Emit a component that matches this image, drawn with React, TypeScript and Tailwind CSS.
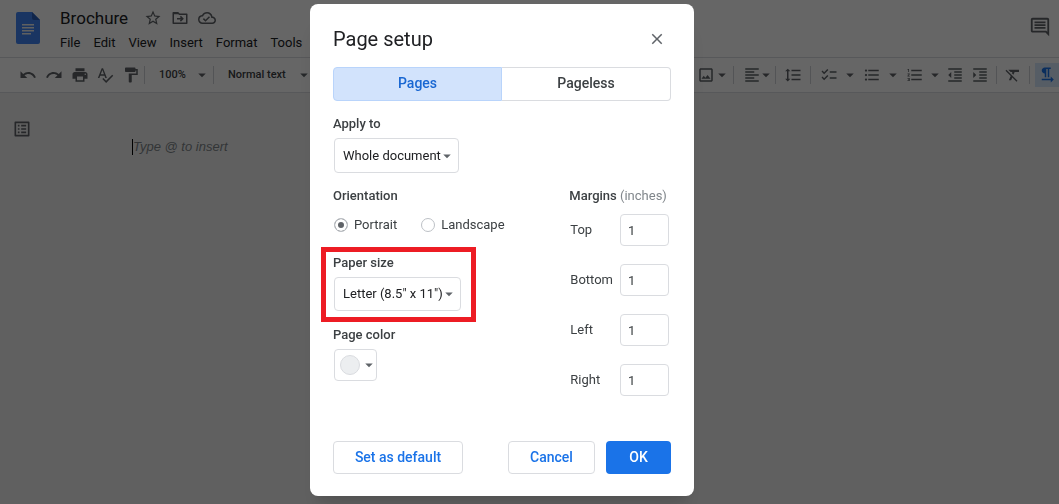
import { useState } from 'react';
import type { IconType } from 'react-icons';
import {
  MdArrowDropDown,
  MdChecklist,
  MdClose,
  MdFormatAlignLeft,
  MdFormatClear,
  MdFormatIndentDecrease,
  MdFormatIndentIncrease,
  MdFormatLineSpacing,
  MdFormatListBulleted,
  MdFormatListNumbered,
  MdFormatPaint,
  MdFormatTextdirectionLToR,
  MdOutlineCloudDone,
  MdOutlineImage,
  MdOutlineInsertComment,
  MdOutlineListAlt,
  MdPrint,
  MdRedo,
  MdSpellcheck,
  MdStarBorder,
  MdUndo,
} from 'react-icons/md';

const menus = ['File', 'Edit', 'View', 'Insert', 'Format', 'Tools'];
const sides = ['Top', 'Bottom', 'Left', 'Right'];

function DocsLogo() {
  return (
    <svg viewBox="0 0 24 32" className="w-6 h-8" aria-hidden="true">
      <path d="M2 0h14l8 8v22a2 2 0 0 1-2 2H2a2 2 0 0 1-2-2V2a2 2 0 0 1 2-2z" fill="#4285f4" />
      <path d="M16 0l8 8h-6a2 2 0 0 1-2-2z" fill="#2a5db8" />
      <path d="M6 12h12v1.6H6zM6 15h12v1.6H6zM6 18h12v1.6H6zM6 21h9v1.6H6z" fill="#f1f1f1" />
    </svg>
  );
}

function MoveFolder() {
  return (
    <svg viewBox="0 0 24 24" className="w-[18px] h-[18px]" fill="none" stroke="currentColor" strokeWidth="2" aria-hidden="true">
      <path d="M3 5h6.2l2 2H21v12H3z" strokeLinejoin="round" />
      <path d="M3 6h7" />
      <path d="M8 13h7M12.5 9.8l3.2 3.2-3.2 3.2" />
    </svg>
  );
}

function Tool({ icon: Icon, label, className = 'w-[26px]' }: { icon: IconType; label: string; className?: string }) {
  return (
    <button aria-label={label} className={`flex h-6 shrink-0 items-center justify-center ${className}`}>
      <Icon className="w-[18px] h-[18px] shrink-0" />
    </button>
  );
}

function Caret({ label, className = 'w-4' }: { label: string; className?: string }) {
  return (
    <button aria-label={label} className={`flex h-6 shrink-0 items-center justify-center ${className}`}>
      <MdArrowDropDown className="w-[18px] h-[18px] shrink-0" />
    </button>
  );
}

function Divider() {
  return <div className="w-px h-[18px] shrink-0 bg-[#cfd2d6]" />;
}

function Editor() {
  return (
    <div className="min-h-screen bg-[#f1f1f1] text-[#202124]">
      {/* Title and menus */}
      <header className="flex h-[57px] justify-between bg-white pl-4 pr-2">
        <div className="flex">
          <div className="pt-3">
            <DocsLogo />
          </div>
          <div className="pl-5 pt-2">
            <div className="flex items-center h-5">
              <h1 className="text-[17px] leading-5">Brochure</h1>
              <div className="flex items-center gap-[9px] pl-4 text-[#5f6368]">
                <button aria-label="Star"><MdStarBorder className="w-[18px] h-[18px]" /></button>
                <button aria-label="Move"><MoveFolder /></button>
                <button aria-label="Saved to Drive"><MdOutlineCloudDone className="w-[18px] h-[18px]" /></button>
              </div>
            </div>
            <nav className="mt-1.5 flex gap-[13px] text-[13px] leading-[18px]">
              {menus.map((m) => (
                <button key={m}>{m}</button>
              ))}
            </nav>
          </div>
        </div>
        <button aria-label="Comments" className="pb-1 text-[#5f6368]">
          <MdOutlineInsertComment className="w-[22px] h-[22px]" />
        </button>
      </header>

      {/* Toolbar */}
      <div className="flex h-9 items-center justify-between border-y border-[#dadce0] bg-white pl-[15px] text-[#5f6368]">
        <div className="flex items-center">
          <Tool icon={MdUndo} label="Undo" />
          <Tool icon={MdRedo} label="Redo" />
          <Tool icon={MdPrint} label="Print" className="w-[25px]" />
          <Tool icon={MdSpellcheck} label="Spelling" />
          <Tool icon={MdFormatPaint} label="Paint format" />
          <Divider />
          <button className="flex items-center pl-3.5 text-[11px] font-medium text-[#3c4043]">
            <span className="w-[34px] text-left">100%</span>
            <MdArrowDropDown className="w-[18px] h-[18px] text-[#5f6368]" />
          </button>
          <span className="w-0.5" />
          <Divider />
          <button className="flex items-center pl-3.5 text-[11px] font-medium text-[#3c4043]">
            <span className="w-[67px] text-left">Normal text</span>
            <MdArrowDropDown className="w-[18px] h-[18px] text-[#5f6368]" />
          </button>
        </div>
        <div className="flex items-center">
          <Tool icon={MdOutlineImage} label="Image" className="w-4" />
          <Caret label="Image options" />
          <span className="w-[3px]" />
          <Divider />
          <span className="w-2" />
          <Tool icon={MdFormatAlignLeft} label="Align" className="w-5" />
          <Caret label="Align options" className="w-2" />
          <span className="w-[5px]" />
          <Divider />
          <Tool icon={MdFormatLineSpacing} label="Line spacing" className="w-[34px]" />
          <Divider />
          <Tool icon={MdChecklist} label="Checklist" className="w-[35px]" />
          <Caret label="Checklist options" className="w-2" />
          <Tool icon={MdFormatListBulleted} label="Bulleted list" className="w-[35px]" />
          <Caret label="Bulleted list options" className="w-2" />
          <Tool icon={MdFormatListNumbered} label="Numbered list" className="w-[35px]" />
          <Caret label="Numbered list options" className="w-1.5" />
          <span className="w-1" />
          <Tool icon={MdFormatIndentDecrease} label="Decrease indent" className="w-[25px]" />
          <Tool icon={MdFormatIndentIncrease} label="Increase indent" className="w-[25px]" />
          <span className="w-1" />
          <Divider />
          <Tool icon={MdFormatClear} label="Clear formatting" className="w-8" />
          <Divider />
          <span className="w-[5px]" />
          <button aria-label="Left to right" className="flex h-6 w-6 items-center justify-center bg-[#d8e8fd] text-[#1a73e8]">
            <MdFormatTextdirectionLToR className="w-[18px] h-[18px]" />
          </button>
        </div>
      </div>

      {/* Document */}
      <main className="flex pl-3 pt-[26px]">
        <button aria-label="Show outline" className="h-5 text-[#5f6368]">
          <MdOutlineListAlt className="w-5 h-5" />
        </button>
        <p className="ml-[100px] mt-5 h-4 border-l border-black font-['Liberation_Sans',Arial,sans-serif] text-[13px] italic leading-4 text-[#80868b]">
          Type @ to insert
        </p>
      </main>
    </div>
  );
}

function PickList({ id, value, className }: { id: string; value: string; className: string }) {
  return (
    <div className={`relative ml-px ${className}`}>
      <select id={id} className="h-full w-full appearance-none rounded border border-[#dadce0] bg-white pl-2 text-[13px] text-[#202124]">
        <option>{value}</option>
      </select>
      <MdArrowDropDown className="pointer-events-none absolute right-[3px] top-1/2 w-[18px] h-[18px] -translate-y-1/2 text-[#5f6368]" />
    </div>
  );
}

function PageSetup() {
  const [orientation, setOrientation] = useState('Portrait');
  const [margins, setMargins] = useState<Record<string, string>>({ Top: '1', Bottom: '1', Left: '1', Right: '1' });

  return (
    <div role="dialog" aria-labelledby="setup-title" className="w-96 rounded-lg bg-white px-[23px] pb-[22px] pt-[23px] text-[13px] leading-4 text-[#3c4043] shadow-xl">
      <div className="flex items-center justify-between">
        <h2 id="setup-title" className="text-[20px] leading-6 text-[#202124]">Page setup</h2>
        <button aria-label="Close" className="mr-[5px] text-[#5f6368]">
          <MdClose className="w-[18px] h-[18px]" />
        </button>
      </div>

      <div role="tablist" className="mt-4 grid h-[34px] grid-cols-2 text-[14px] font-medium">
        <button role="tab" aria-selected="true" className="rounded-l border border-[#b9d4fb] bg-[#d2e3fc] pb-0.5 text-[#1967d2]">Pages</button>
        <button role="tab" aria-selected="false" className="rounded-r border border-l-0 border-[#dadce0] pb-0.5">Pageless</button>
      </div>

      <label htmlFor="apply" className="mt-[15px] block font-medium">Apply to</label>
      <PickList id="apply" value="Whole document" className="mt-1.5 h-[35px] w-[125px]" />

      <div className="mt-[15px] flex justify-between">
        <div>
          <fieldset>
            <legend className="font-medium">Orientation</legend>
            <div className="mt-[11px] flex h-5 items-center gap-6 pl-px">
              {['Portrait', 'Landscape'].map((o) => (
                <label key={o} className="flex items-center gap-1.5">
                  <input
                    type="radio"
                    name="orientation"
                    checked={orientation === o}
                    onChange={() => setOrientation(o)}
                    className="h-3.5 w-3.5 appearance-none rounded-full border border-[#bdc1c6] bg-white checked:bg-[#5f6368] checked:shadow-[inset_0_0_0_3px_white]"
                  />
                  {o}
                </label>
              ))}
            </div>
          </fieldset>

          <div className="relative mt-5">
            <label htmlFor="paper" className="block font-medium">Paper size</label>
            <PickList id="paper" value={'Letter (8.5" x 11")'} className="mt-1.5 h-[34px] w-[127px]" />
            {/* Highlight frame */}
            <div className="pointer-events-none absolute -left-3 -top-2 h-[75px] w-[155px] border-5 border-[#ed1c24]" />
          </div>

          <p id="color-label" className="mt-4 font-medium">Page color</p>
          <button aria-labelledby="color-label" className="ml-px mt-1.5 flex h-8 w-[43px] items-center rounded border border-[#dadce0] pl-[5px]">
            <span className="h-5 w-5 shrink-0 rounded-full border border-[#dadce0] bg-[#eceef0]" />
            <MdArrowDropDown className="w-[18px] h-[18px] shrink-0 text-[#5f6368]" />
          </button>
        </div>

        <div className="pr-0.5">
          <p>
            <span className="font-medium">Margins</span> <span className="text-[#80868b]">(inches)</span>
          </p>
          <div className="mt-2.5 flex flex-col gap-[18px]">
            {sides.map((side) => (
              <label key={side} className="flex h-8 items-center justify-between gap-[7px] pl-px">
                {side}
                <input
                  type="text"
                  value={margins[side]}
                  onChange={(e) => setMargins({ ...margins, [side]: e.target.value })}
                  className="h-8 w-[49px] rounded border border-[#dadce0] pl-[7px] text-[#3c4043]"
                />
              </label>
            ))}
          </div>
        </div>
      </div>

      <div className="mt-[45px] flex h-[33px] text-[14px] font-medium text-[#1a73e8]">
        <button className="w-[130px] rounded border border-[#dadce0] pb-0.5">Set as default</button>
        <button className="ml-auto w-[87px] rounded border border-[#dadce0] pb-0.5">Cancel</button>
        <button className="ml-[11px] w-[65px] rounded bg-[#1a73e8] pb-0.5 text-white">OK</button>
      </div>
    </div>
  );
}

export default function App() {
  return (
    <div className="font-[Roboto,sans-serif]">
      <Editor />
      <div className="fixed inset-0 flex items-start justify-center bg-black/60 pr-[55px] pt-1">
        <PageSetup />
      </div>
    </div>
  );
}
